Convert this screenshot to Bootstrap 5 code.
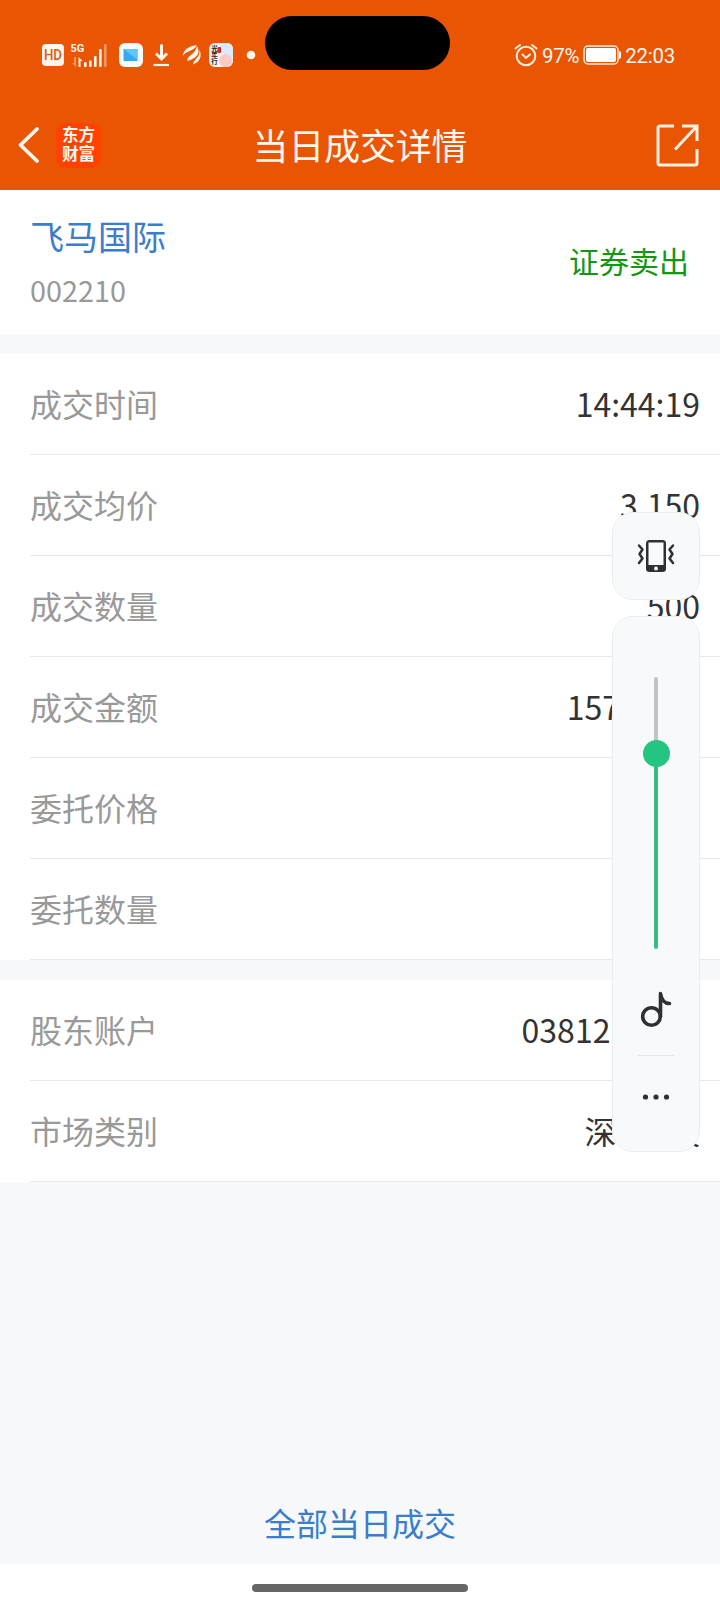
<!DOCTYPE html>
<html lang="zh-CN">
<head>
<meta charset="utf-8">
<meta name="viewport" content="width=device-width, initial-scale=1">
<title>当日成交详情</title>
<link rel="stylesheet" href="https://cdn.jsdelivr.net/npm/bootstrap@5.3.0/dist/css/bootstrap.min.css">
<style>
body{font-family:"Noto Sans CJK SC",sans-serif;background:#f6f8fa;color:#333;width:720px;height:1612px;line-height:1;overflow:hidden}
svg{display:block;flex:none}
.app-head{background:#ea5504;height:190px;color:#fff8ef}
.status-bar{height:100px;padding:10px 45px 0 40px}
.status-text{font-family:Roboto,"Noto Sans CJK SC",sans-serif;font-size:20.4px;letter-spacing:-.2px}
.island{width:185px;height:54px;left:265px;top:16px;background:#000;border-radius:27px}
.title-bar{height:90px;padding:0 21px 0 17px}
.app-title{font-size:35.8px;padding-bottom:0}
.brand-logo{width:45px;height:45px;border-radius:9px;background:#ff4200;font-weight:700;font-size:16.5px;line-height:19px;padding:2px 0 0 6px;margin-left:16px}
.summary{height:144px;padding:0 31px 0 30px;margin-bottom:20px}
.stock-name{font-size:34px;color:#3b7dcb;margin-bottom:23px}
.stock-code{font-size:28.8px;color:#999}
.side-sell{font-size:30px;color:#149614;padding-bottom:4px}
.detail-row{height:101px;padding:0 20px 4px 30px;font-size:32px;position:relative}
.detail-row::after{content:"";position:absolute;left:30px;right:0;bottom:0;height:1px;background:#e8e9ea}
.row-label{color:#999}
.bottom-link{height:80px;padding-bottom:4px;font-size:32px;color:#3b7dcb}
.home-area{height:48px}
.home-pill{width:216px;height:8px;background:#666}
.volume{top:512px;right:20px;width:88px;gap:16px}
.vol-box{background:#f7f9fb;border:1px solid #ebedee;border-radius:21px}
.mode-box{height:88px}
.slider-box{height:536px;padding-top:60px}
.slider-track{width:4px;height:272px;border-radius:2px;background:linear-gradient(#c2c3c4 76px,#37bc82 76px)}
.slider-thumb{width:27px;height:27px;top:62.5px;background:#24c580}
.thin-line{width:36px;height:1px;background:#e6e7e9}
.tiny-seal{writing-mode:vertical-rl}
</style>
</head>
<body class="d-flex flex-column position-relative">
<header class="app-head position-relative">
  <div class="status-bar d-flex align-items-center justify-content-between">
    <svg width="220" height="30" viewBox="40 40 220 30">
      <rect x="42" y="44" width="22" height="22" rx="4" fill="#fff6ea"/>
      <text x="53" y="60.300" text-anchor="middle" font-family="Roboto" font-size="15" textLength="18" lengthAdjust="spacingAndGlyphs" font-weight="500" fill="#dc5a18">HD</text>
      <text x="70.500" y="52.300" font-family="Roboto" font-size="11" font-weight="700" fill="#fff6ea">5G</text>
      <g fill="#fff6ea"><path d="M78.500 57l4 4h-2v6h-2z"/><path d="M76 67l-4-4h2v-6h2z" opacity=".4"/><rect x="84" y="62" width="2.600" height="5" rx="1"/><rect x="89" y="60.500" width="2.600" height="6.500" rx="1"/><rect x="94" y="56" width="2.600" height="11" rx="1"/><rect x="99" y="49" width="2.600" height="18" rx="1"/><rect x="104" y="44" width="2.600" height="23" rx="1" opacity=".4"/></g>
      <rect x="119" y="43" width="24" height="24" rx="6" fill="#f5fbff"/><path d="M123.500 49h14v12h-14z" fill="#35a9f1"/><path d="M123.500 49l14 11V49z" fill="#62c4fa"/>
      <path d="M161.500 44.500v14M156 53.500l5.500 5.500 5.500-5.500" fill="none" stroke="#fff6ea" stroke-width="3"/><path d="M153.500 65h15.500" stroke="#fff6ea" stroke-width="2.200"/>
      <g fill="#fff6ea"><path d="M182.500 56Q184.500 46.500 196.500 45Q196 48 191.500 50Q186 52 182.500 56z"/><path d="M187.500 61Q186.500 58 191 55Q196 51 197 46Q201 53 195 57.500Q191 60 187.500 61z"/><path d="M193 64.500Q193 62 196 59Q200 55 199.500 49.500Q203.500 60 193 64.500z"/></g>
      <rect x="209" y="43" width="24" height="24" rx="6" fill="#fff1ee"/><path d="M221 43h6a6 6 0 0 1 6 6v12q-10 2-12-18z" fill="#d9eafb"/><circle cx="225.500" cy="60.500" r="6.500" fill="#ffc9c3"/>
      <text class="tiny-seal" x="214.500" y="45" font-size="6.500" font-weight="700" fill="#222">光年行</text><rect x="217.500" y="47" width="3.500" height="6" rx="1" fill="#d5282e"/>
      <circle cx="251" cy="55" r="4.300" fill="#fff6ea"/>
    </svg>
    <div class="d-flex align-items-center status-text">
      <svg width="24" height="24" viewBox="0 0 24 24" fill="none" stroke="#fff0dd" stroke-width="2" stroke-linecap="round"><circle cx="12" cy="13" r="9.300"/><path d="M1.500 5.500L6 2M22.500 5.500L18 2M8.500 11.500l3.500 3.500 4-3.500"/></svg>
      <span style="margin:2px 0 0 4px">97%</span>
      <svg class="ms-1" width="38" height="20" viewBox="0 0 38 20"><rect x="1" y="1" width="34" height="18" rx="4" fill="none" stroke="#fff0dd" stroke-width="1.500"/><rect x="3" y="3" width="30" height="14" rx="2" fill="#fff"/><path d="M36 6q2 0 2 2v4q0 2-2 2z" fill="#fff"/></svg>
      <span style="margin:2px 0 0 4px">22:03</span>
    </div>
  </div>
  <div class="island position-absolute"></div>
  <div class="title-bar position-relative d-flex align-items-center">
    <svg width="23" height="38" viewBox="0 0 23 38"><path d="M20 3L3.500 19 20 35" fill="none" stroke="#fff8ef" stroke-width="3.800" stroke-linecap="round" stroke-linejoin="round"/></svg>
    <div class="brand-logo">东方<br>财富</div>
    <div class="app-title position-absolute start-50 translate-middle-x">当日成交详情</div>
    <svg class="ms-auto" width="43" height="43" viewBox="0 0 43 43" fill="none" stroke="#fff0e2" stroke-width="3"><path d="M18 2H4Q2 2 2 4v35q0 2 2 2h35q2 0 2-2V25M26 2h15v15M41 2L19 25.500"/></svg>
  </div>
</header>
<main class="flex-grow-1 d-flex flex-column">
  <section class="summary bg-white d-flex align-items-center justify-content-between">
    <div><div class="stock-name">飞马国际</div><div class="stock-code">002210</div></div>
    <div class="side-sell">证券卖出</div>
  </section>
  <section class="bg-white">
    <div class="detail-row d-flex align-items-center justify-content-between"><span class="row-label">成交时间</span><span>14:44:19</span></div>
    <div class="detail-row d-flex align-items-center justify-content-between"><span class="row-label">成交均价</span><span>3.150</span></div>
    <div class="detail-row d-flex align-items-center justify-content-between"><span class="row-label">成交数量</span><span>500</span></div>
    <div class="detail-row d-flex align-items-center justify-content-between"><span class="row-label">成交金额</span><span>1575.000</span></div>
    <div class="detail-row d-flex align-items-center justify-content-between"><span class="row-label">委托价格</span><span>3.150</span></div>
    <div class="detail-row d-flex align-items-center justify-content-between"><span class="row-label">委托数量</span><span>500</span></div>
  </section>
  <section class="bg-white" style="margin-top:20px">
    <div class="detail-row d-flex align-items-center justify-content-between"><span class="row-label">股东账户</span><span style="letter-spacing:.1px">0381211114</span></div>
    <div class="detail-row d-flex align-items-center justify-content-between"><span class="row-label">市场类别</span><span>深圳A股</span></div>
  </section>
  <a class="bottom-link mt-auto d-flex align-items-center justify-content-center text-decoration-none" href="#">全部当日成交</a>
</main>
<footer class="home-area bg-white d-flex align-items-center justify-content-center"><div class="home-pill rounded-pill"></div></footer>

<aside class="volume position-absolute d-flex flex-column">
  <div class="vol-box mode-box d-flex align-items-center justify-content-center">
    <svg width="38" height="34" viewBox="0 0 38 34"><rect x="9" y="1" width="20" height="32" rx="3.500" fill="#2d3136"/><rect x="11.500" y="3.500" width="15" height="22.500" fill="#f7f9fb"/><circle cx="19" cy="29.500" r="2" fill="#f7f9fb"/><path d="M2 6.500l3.500 4L2.500 15l3 4.500L2 24M36 6.500l-3.500 4 3 4.500-3 4.500 3.500 4.500" fill="none" stroke="#2d3136" stroke-width="2.500" stroke-linecap="round" stroke-linejoin="round"/></svg>
  </div>
  <div class="vol-box slider-box d-flex flex-column align-items-center">
    <div class="position-relative d-flex justify-content-center"><div class="slider-track"></div><div class="slider-thumb position-absolute rounded-circle"></div></div>
    <svg style="margin-top:41px" width="34" height="38" viewBox="0 0 34 38" fill="none" stroke="#2d3136" stroke-width="3.600"><circle cx="12.500" cy="26.500" r="8.800"/><path d="M21.500 26.500V3.500Q23 13.500 30.500 13.500" stroke-linecap="round" stroke-linejoin="round"/></svg>
    <div class="thin-line" style="margin-top:27px"></div>
    <svg style="margin-top:38px" width="28" height="6" viewBox="0 0 28 6" fill="#2d3136"><circle cx="3.500" cy="3" r="2.600"/><circle cx="14" cy="3" r="2.600"/><circle cx="24.500" cy="3" r="2.600"/></svg>
  </div>
</aside>
<script src="https://cdn.jsdelivr.net/npm/bootstrap@5.3.0/dist/js/bootstrap.bundle.min.js"></script>
</body>
</html>
